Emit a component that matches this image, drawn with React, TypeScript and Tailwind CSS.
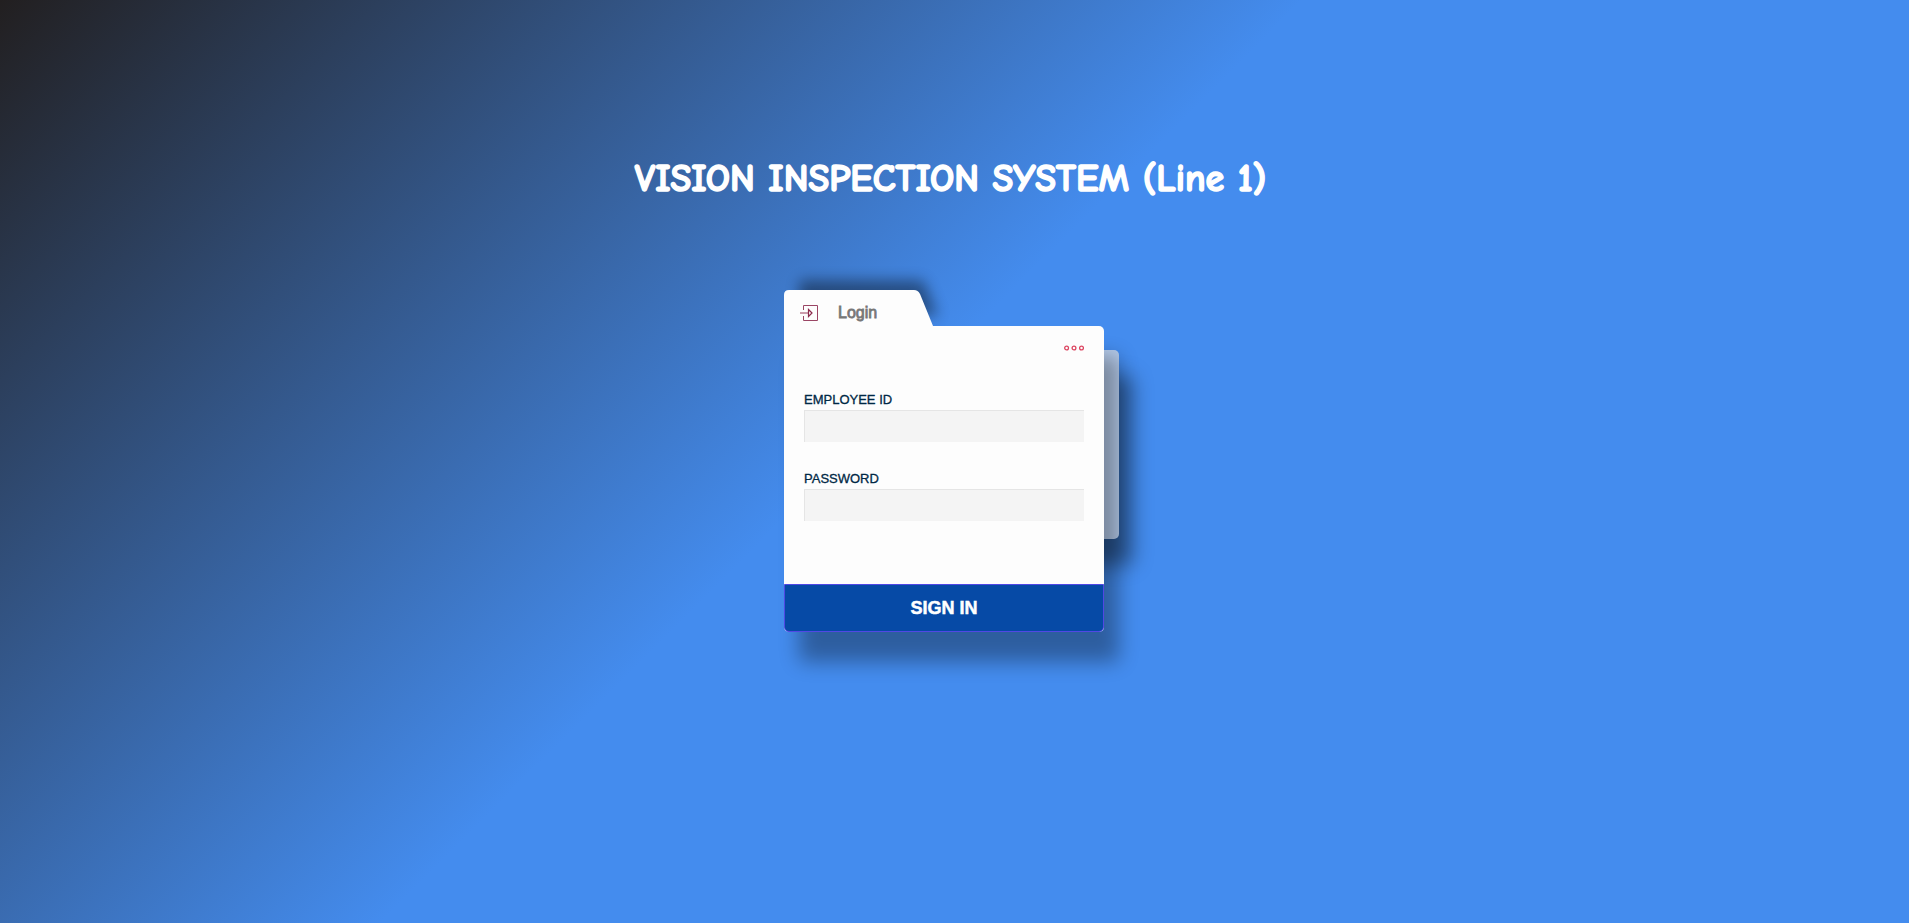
import React from "react";

function LoginIcon() {
  return (
    <svg className="h-[18px] w-[18px]" viewBox="0 0 18 18" fill="none" aria-hidden="true">
      <path d="M3.5 6V1.5h14v15h-14V12" stroke="#9a4564" />
      <path d="M0 9h8" stroke="#b57188" strokeWidth="1.4" />
      <path d="M8.5 5.5 12 9l-3.5 3.5z" stroke="#8c2a4c" strokeWidth="1.2" />
    </svg>
  );
}

function MoreIcon() {
  return (
    <svg className="h-[6px] w-[20px]" viewBox="0 0 20 6" fill="none" stroke="#dc4560" strokeWidth="1.3" aria-hidden="true">
      <circle cx="2.6" cy="3" r="1.9" />
      <circle cx="10" cy="3" r="1.9" />
      <circle cx="17.5" cy="3" r="1.9" />
    </svg>
  );
}

function Field({ id, label, type }: { id: string; label: string; type: string }) {
  return (
    <div className="flex flex-col">
      <label htmlFor={id} className="text-[13px] leading-5 text-[#002845] [-webkit-text-stroke:0.3px_#002845]">
        {label}
      </label>
      <input
        id={id}
        type={type}
        className="h-8 w-full border-t border-l border-[#e5e5e5] bg-[#f4f4f4] px-2 text-sm outline-none"
      />
    </div>
  );
}

export default function App() {
  return (
    <main className="flex min-h-screen flex-col items-center bg-[linear-gradient(135deg,#221f20_0%,#448cee_46%)] font-['Liberation_Sans',Arial,sans-serif]">
      <h1 className="mt-[155px] h-12 pr-2 text-center font-['Comic_Sans_MS','Comic_Neue','Open_Sans',sans-serif] text-[38px] leading-[48px] font-bold text-white [-webkit-text-stroke:1.5px_white]">
        VISION INSPECTION SYSTEM (Line 1)
      </h1>
      <form className="relative isolate mt-[87px] mr-[21px] w-80" onSubmit={(e) => e.preventDefault()}>
        <div className="absolute top-[60px] -right-[15px] -z-10 h-[189px] w-40 rounded-[5px] bg-[#b6ccec] shadow-[14px_26px_20px_rgba(0,0,0,0.4)]" />
        <div className="absolute top-9 left-0 -z-10 h-[306px] w-full rounded-[5px] shadow-[15px_30px_20px_rgba(0,0,0,0.33)]" />
        <svg className="absolute -top-[10px] left-[15px] -z-10 h-9 w-[149px] overflow-visible opacity-40 blur-[7px]" viewBox="0 0 149 36" aria-hidden="true">
          <path d="M0 36V5Q0 0 5 0h115q4 0 6 4l13 32z" />
        </svg>
        <div className="relative flex h-9 w-[149px] items-center gap-5 pt-[10px] pl-4">
          <svg className="absolute inset-0 -z-10 h-9 w-[149px]" viewBox="0 0 149 36" aria-hidden="true">
            <path d="M0 36V5Q0 0 5 0h125q4 0 6 4l13 32z" fill="#fdfdfd" />
          </svg>
          <LoginIcon />
          <h2 className="text-base leading-7 text-[#777] [-webkit-text-stroke:0.8px_#777]">Login</h2>
        </div>
        <div className="flex flex-col rounded-[5px] rounded-tl-none bg-[#fdfdfd]">
          <div className="flex justify-end px-5 pt-[14px]">
            <button type="button" aria-label="More options" className="flex h-4 items-center">
              <MoreIcon />
            </button>
          </div>
          <div className="flex flex-col gap-[27px] px-5 pt-[34px] pb-[63px]">
            <Field id="employee" label="EMPLOYEE ID" type="text" />
            <Field id="password" label="PASSWORD" type="password" />
          </div>
          <button type="submit" className="h-12 rounded-b-[5px] border border-[#5048e5] bg-[#064aa6] text-lg font-bold text-white [-webkit-text-stroke:0.5px_white]">
            SIGN IN
          </button>
        </div>
      </form>
    </main>
  );
}
